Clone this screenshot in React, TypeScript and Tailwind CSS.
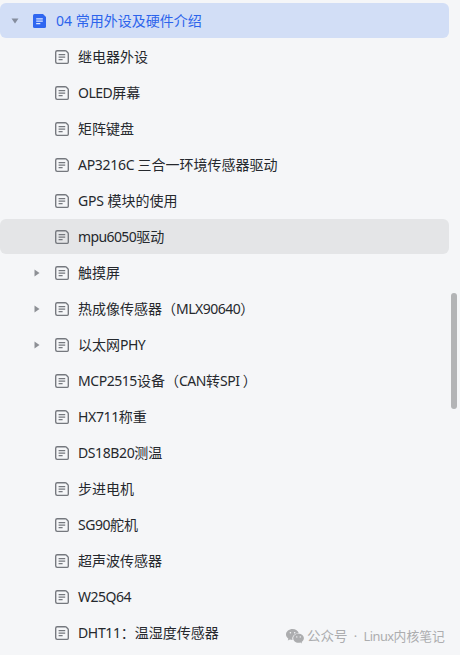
import React from 'react';

type Item = { label: string; expandable?: boolean; hovered?: boolean; tracking?: string };

const items: Item[] = [
  { label: '继电器外设' },
  { label: 'OLED屏幕', tracking: 'tracking-[-0.5px]' },
  { label: '矩阵键盘' },
  { label: 'AP3216C 三合一环境传感器驱动', tracking: 'tracking-[-0.3px]' },
  { label: 'GPS 模块的使用', tracking: 'tracking-[-0.15px]' },
  { label: 'mpu6050驱动', hovered: true, tracking: 'tracking-[-0.6px]' },
  { label: '触摸屏', expandable: true },
  { label: '热成像传感器（MLX90640）', expandable: true, tracking: 'tracking-[-0.5px]' },
  { label: '以太网PHY', expandable: true, tracking: 'tracking-[-0.55px]' },
  { label: 'MCP2515设备（CAN转SPI ）', tracking: 'tracking-[-0.45px]' },
  { label: 'HX711称重' },
  { label: 'DS18B20测温', tracking: 'tracking-[-0.4px]' },
  { label: '步进电机' },
  { label: 'SG90舵机', tracking: 'tracking-[-0.45px]' },
  { label: '超声波传感器' },
  { label: 'W25Q64', tracking: 'tracking-[-0.5px]' },
  { label: 'DHT11：温湿度传感器' },
];

function Label({ text, tracking = 'tracking-[-0.35px]' }: { text: string; tracking?: string }) {
  return (
    <span className="whitespace-pre">
      {text.split(/([A-Za-z0-9 ]+)/).map((part, i) =>
        i % 2 ? (
          <span key={i} className={tracking}>{part}</span>
        ) : (
          part
        ),
      )}
    </span>
  );
}

function DocIcon() {
  return (
    <svg width="14" height="14" viewBox="0 0 14 14" fill="none" stroke="#75787e" strokeWidth="1.35" className="shrink-0">
      <path d="M2 .7H10.2Q10.8 .7 11.2 1.1L12.9 2.8Q13.3 3.2 13.3 3.8V12.3Q13.3 13.3 12.3 13.3H2.2Q.7 13.3 .7 11.8V2.2Q.7 .7 2.2 .7Z" strokeLinejoin="round" />
      <path d="M3.6 4.5H10.2M3.6 7H10.2M3.6 9.6H7.6" strokeWidth="1.25" />
    </svg>
  );
}

export default function App() {
  return (
    <div className="relative h-[655px] w-[460px] overflow-hidden bg-[#f5f6f8] pt-[3px] font-['Noto_Sans','Noto_Sans_CJK_SC',sans-serif] text-[14px] leading-[20px] text-[#25282d]">
      <div className="flex w-[449px] flex-col gap-px">
        <div className="flex h-[35px] items-center rounded-[6px] bg-[#d2def6] pl-[11px] text-[#2c64ec]">
          <svg width="8" height="6" viewBox="0 0 8 6" fill="#858d9d">
            <path d="M.5 .5H7.5L4 5.5Z" />
          </svg>
          <svg width="13" height="14" viewBox="0 0 13 14" className="ml-[14px]">
            <path d="M1.5 0H10L13 3V12.5Q13 14 11.5 14H1.5Q0 14 0 12.5V1.5Q0 0 1.5 0Z" fill="#2f66f0" />
            <path d="M3.2 4.8H9.8M3.2 7.2H9.8M3.2 9.6H7.3" stroke="#dfe8ff" strokeWidth="1.2" />
          </svg>
          <span className="ml-[10px]"><Label text="04 常用外设及硬件介绍" tracking="tracking-[0.05px]" /></span>
        </div>
        {items.map((item) => (
          <div
            key={item.label}
            className={`flex h-[35px] items-center rounded-[6px] ${item.hovered ? 'bg-[#e4e5e7]' : ''}`}
          >
            <div className="flex w-[55px] shrink-0 pl-[34px]">
              {item.expandable && (
                <svg width="6" height="8" viewBox="0 0 6 8" fill="#8d9095">
                  <path d="M.5 .5V7.5L5.5 4Z" />
                </svg>
              )}
            </div>
            <DocIcon />
            <span className="ml-[9px]"><Label text={item.label} tracking={item.tracking} /></span>
          </div>
        ))}
      </div>
      <div className="absolute left-[451px] top-[293px] h-[116px] w-[6px] rounded-full bg-[#b3b4b6]" />
      <div className="absolute left-[286px] top-[626px] flex h-5 items-center text-[12.8px] text-[#acadaf]">
        <svg width="18" height="15" viewBox="0 0 18 15" fill="#acadaf">
          <path d="M6.6 0C3 0 0 2.4 0 5.5c0 1.7.9 3.2 2.4 4.2L1.8 11.6l2.2-1.1c.8.2 1.6.4 2.5.4-.9-3.7 2.2-6.7 6.3-6.7C12.1 1.7 9.6 0 6.6 0Z" />
          <path d="M12.5 4.8C9.5 4.8 7.2 6.8 7.2 9.3s2.3 4.5 5.3 4.5c.6 0 1.3-.1 1.9-.3l1.700 1-.5-1.600c1.400-.8 2.300-2.100 2.300-3.600 0-2.500-2.400-4.500-5.400-4.500Z" />
          <g fill="#f5f6f8">
            <circle cx="4.400" cy="3.800" r=".8" />
            <circle cx="8.700" cy="3.800" r=".8" />
            <circle cx="10.800" cy="7.900" r=".7" />
            <circle cx="14.300" cy="7.900" r=".7" />
          </g>
        </svg>
        <span className="ml-[3px] whitespace-pre text-[13.5px]">公众号</span>
        <span className="w-[16px] text-center">·</span>
        <span className="whitespace-pre"><span className="tracking-[-0.5px]">Linux</span>内核笔记</span>
      </div>
    </div>
  );
}
